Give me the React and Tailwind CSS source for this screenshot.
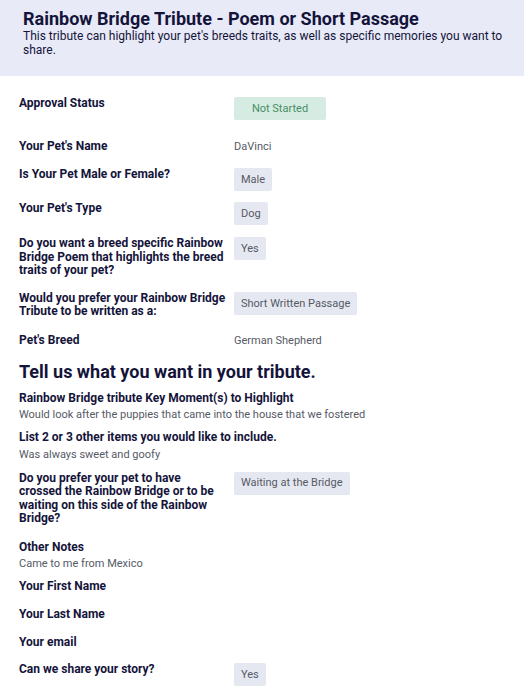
// Rainbow Bridge tribute – submission detail view
const navy = 'text-[#14143a]'

function Badge({ children, green }) {
  return (
    <span
      className={
        green
          ? 'inline-flex h-[23px] w-[92px] items-center justify-center rounded-[2px] bg-[#d6ebe1] text-[11px] text-[#468f68]'
          : 'inline-flex h-[23px] items-center rounded-[2px] bg-[#e6e8f1] px-[7px] text-[11px] text-[#555a66]'
      }
    >
      {children}
    </span>
  )
}

function Row({ label, children, className = '', labelWidth = 'w-[209px]' }) {
  return (
    <div className={`flex items-start ${className}`}>
      <div className="w-[215px] shrink-0">
        <div className={`${labelWidth} text-[12px] font-bold leading-[13.6px] ${navy}`}>{label}</div>
      </div>
      <div className="text-[11px] leading-[13.5px] text-[#555a66]">{children}</div>
    </div>
  )
}

function Stacked({ label, value, className = '' }) {
  return (
    <div className={className}>
      <div className={`text-[12px] font-bold leading-[14px] ${navy}`}>{label}</div>
      {value && <div className="mt-[3.5px] text-[11px] leading-[13px] text-[#555a66]">{value}</div>}
    </div>
  )
}

export default function App() {
  return (
    <div className="min-h-screen w-full bg-white" style={{ fontFamily: 'Roboto, "Liberation Sans", sans-serif' }}>
      <header className="bg-[#e8eaf7] pl-[23px] pr-[15px] pt-[8px] pb-[19px]">
        <h1 className={`text-[18px] font-bold leading-[21px] ${navy}`}>Rainbow Bridge Tribute - Poem or Short Passage</h1>
        <p className="text-[12px] leading-[14px] text-[#14143a]">
          This tribute can highlight your pet's breeds traits, as well as specific memories you want to share.
        </p>
      </header>

      <main className="flex flex-col px-[19px]">
        <Row label="Approval Status" className="mt-[21px]">
          <Badge green>Not Started</Badge>
        </Row>
        <Row label="Your Pet's Name" className="mt-[20px]">
          <span className="leading-[14px]">DaVinci</span>
        </Row>
        <Row label="Is Your Pet Male or Female?" className="mt-[14px]">
          <Badge>Male</Badge>
        </Row>
        <Row label="Your Pet's Type" className="mt-[11px]">
          <Badge>Dog</Badge>
        </Row>
        <Row label="Do you want a breed specific Rainbow Bridge Poem that highlights the breed traits of your pet?" className="mt-[12px]">
          <Badge>Yes</Badge>
        </Row>
        <Row label="Would you prefer your Rainbow Bridge Tribute to be written as a:" className="mt-[14px]">
          <Badge>Short Written Passage</Badge>
        </Row>
        <Row label="Pet's Breed" className="mt-[15px]">
          <span>German Shepherd</span>
        </Row>

        <h2 className={`mt-[13px] text-[18px] font-bold leading-[22px] ${navy}`}>Tell us what you want in your tribute.</h2>

        <Stacked
          className="mt-[8px]"
          label="Rainbow Bridge tribute Key Moment(s) to Highlight"
          value="Would look after the puppies that came into the house that we fostered"
        />
        <Stacked className="mt-[9px]" label="List 2 or 3 other items you would like to include." value="Was always sweet and goofy" />

        <Row
          label="Do you prefer your pet to have crossed the Rainbow Bridge or to be waiting on this side of the Rainbow Bridge?"
          labelWidth="w-[200px]"
          className="mt-[11px]"
        >
          <Badge>Waiting at the Bridge</Badge>
        </Row>

        <Stacked className="mt-[14px]" label="Other Notes" value="Came to me from Mexico" />
        <Stacked className="mt-[9px]" label="Your First Name" />
        <Stacked className="mt-[14px]" label="Your Last Name" />
        <Stacked className="mt-[14px]" label="Your email" />
        <Row label="Can we share your story?" className="mt-[14px] pb-[12px]">
          <Badge>Yes</Badge>
        </Row>
      </main>
    </div>
  )
}
